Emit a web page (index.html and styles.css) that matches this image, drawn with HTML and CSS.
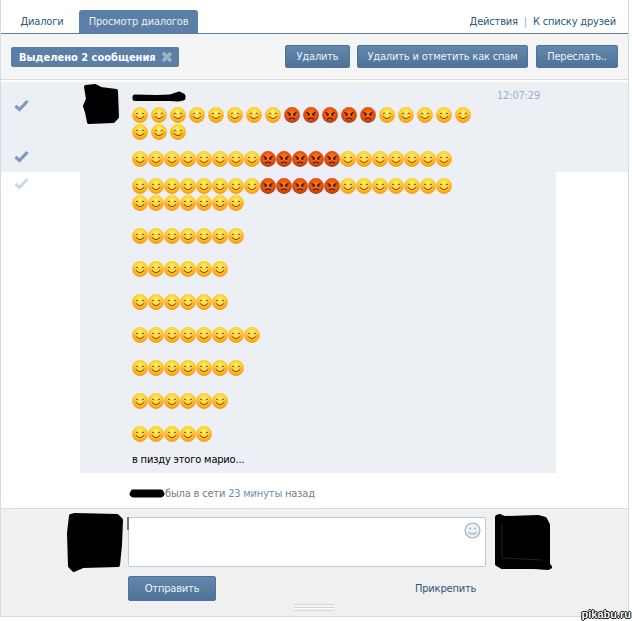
FILE: index.html
```html
<!DOCTYPE html>
<html lang="ru">
<head>
  <meta charset="UTF-8" />
  <title>Просмотр диалогов</title>
  <link rel="stylesheet" href="styles.css">
</head>
<body>

  <!-- shared icons -->
  <svg class="icon-defs" aria-hidden="true">
    <defs>
      <radialGradient id="smile-fill" cx="50%" cy="36%" r="68%">
        <stop offset="0" stop-color="#fff47e"/>
        <stop offset="0.5" stop-color="#ffd02a"/>
        <stop offset="0.85" stop-color="#fb9f12"/>
        <stop offset="1" stop-color="#ee7f0c"/>
      </radialGradient>
      <radialGradient id="angry-fill" cx="50%" cy="40%" r="62%">
        <stop offset="0" stop-color="#fb7c1c"/>
        <stop offset="0.65" stop-color="#e2500c"/>
        <stop offset="1" stop-color="#983a12"/>
      </radialGradient>
      <symbol id="smile" viewBox="0 0 16 16">
        <circle cx="8" cy="8" r="7.9" fill="url(#smile-fill)"/>
        <circle cx="3.4" cy="9.2" r="1.6" fill="#ff9a4a" opacity=".65"/>
        <circle cx="12.6" cy="9.2" r="1.6" fill="#ff9a4a" opacity=".65"/>
        <path d="M3.9 7Q5.2 5 6.5 7M9.5 7Q10.8 5 12.1 7M4 9.4Q8 13.8 12 9.4" fill="none" stroke="#7a4a10" stroke-width="1"/>
      </symbol>
      <symbol id="angry" viewBox="0 0 16 16">
        <circle cx="8" cy="8" r="7.9" fill="url(#angry-fill)"/>
        <path d="M3.4 5.4L6.8 7.4M12.6 5.4L9.2 7.4" stroke="#4a1606" stroke-width="1.3"/>
        <circle cx="5.5" cy="8" r="1" fill="#3c1204"/>
        <circle cx="10.5" cy="8" r="1" fill="#3c1204"/>
        <path d="M5.2 12.2Q8 9.8 10.8 12.2" fill="none" stroke="#3c1204" stroke-width="1.2"/>
      </symbol>
      <symbol id="check" viewBox="0 0 15 13">
        <path d="M1.5 7L5.5 10.5L13.5 2" fill="none" stroke="currentColor" stroke-width="3.2"/>
      </symbol>
    </defs>
  </svg>

  <div class="page">

    <!-- Tabs -->
    <div class="tabs">
      <a class="tab tab-first">Диалоги</a>
      <a class="tab tab-active">Просмотр диалогов</a>
      <div class="tabs-links">
        <a>Действия</a>
        <span class="tabs-sep">|</span>
        <a>К списку друзей</a>
      </div>
    </div>

    <!-- Selected messages toolbar -->
    <div class="toolbar">
      <div class="selected-badge">
        Выделено 2 сообщения
        <svg class="badge-close" viewBox="0 0 12 12"><path d="M2 2L10 10M10 2L2 10" stroke="#9fb3c9" stroke-width="3.4"/></svg>
      </div>
      <div class="toolbar-buttons">
        <button class="btn btn-delete">Удалить</button>
        <button class="btn btn-spam">Удалить и отметить как спам</button>
        <button class="btn btn-forward">Переслать..</button>
      </div>
    </div>

    <!-- Messages -->
    <div class="messages">

      <div class="msg msg-selected msg-first">
        <svg class="check"><use href="#check"/></svg>
        <div class="msg-body">
          <svg class="msg-avatar" viewBox="0 0 36 41"><path class="scribble" d="M3 3L12 2L18 5L33 7L34 33L30 37L6 38L4 28L2 22L5 15Z"/></svg>
          <div class="msg-content">
            <svg class="msg-name" viewBox="0 0 54 11"><path class="scribble-thin" d="M3 6L24 6.5L38 6L47 3L51 5L51 7L46 8L38 7.5L24 7.5L3 7.5Z"/></svg>
            <div class="emoji-line emoji-spaced">
              <svg class="emoji"><use href="#smile"/></svg><svg class="emoji"><use href="#smile"/></svg><svg class="emoji"><use href="#smile"/></svg><svg class="emoji"><use href="#smile"/></svg><svg class="emoji"><use href="#smile"/></svg><svg class="emoji"><use href="#smile"/></svg><svg class="emoji"><use href="#smile"/></svg><svg class="emoji"><use href="#smile"/></svg>
              <svg class="emoji"><use href="#angry"/></svg><svg class="emoji"><use href="#angry"/></svg><svg class="emoji"><use href="#angry"/></svg><svg class="emoji"><use href="#angry"/></svg><svg class="emoji"><use href="#angry"/></svg>
              <svg class="emoji"><use href="#smile"/></svg><svg class="emoji"><use href="#smile"/></svg><svg class="emoji"><use href="#smile"/></svg><svg class="emoji"><use href="#smile"/></svg><svg class="emoji"><use href="#smile"/></svg>
            </div>
            <div class="emoji-line emoji-spaced">
              <svg class="emoji"><use href="#smile"/></svg><svg class="emoji"><use href="#smile"/></svg><svg class="emoji"><use href="#smile"/></svg>
            </div>
          </div>
          <div class="msg-time">12:07:29</div>
        </div>
      </div>

      <div class="msg msg-selected msg-second">
        <svg class="check"><use href="#check"/></svg>
        <div class="msg-body">
          <div class="msg-content">
            <div class="emoji-line">
              <svg class="emoji"><use href="#smile"/></svg><svg class="emoji"><use href="#smile"/></svg><svg class="emoji"><use href="#smile"/></svg><svg class="emoji"><use href="#smile"/></svg><svg class="emoji"><use href="#smile"/></svg><svg class="emoji"><use href="#smile"/></svg><svg class="emoji"><use href="#smile"/></svg><svg class="emoji"><use href="#smile"/></svg>
              <svg class="emoji"><use href="#angry"/></svg><svg class="emoji"><use href="#angry"/></svg><svg class="emoji"><use href="#angry"/></svg><svg class="emoji"><use href="#angry"/></svg><svg class="emoji"><use href="#angry"/></svg>
              <svg class="emoji"><use href="#smile"/></svg><svg class="emoji"><use href="#smile"/></svg><svg class="emoji"><use href="#smile"/></svg><svg class="emoji"><use href="#smile"/></svg><svg class="emoji"><use href="#smile"/></svg><svg class="emoji"><use href="#smile"/></svg><svg class="emoji"><use href="#smile"/></svg>
            </div>
          </div>
        </div>
      </div>

      <div class="msg msg-rest">
        <svg class="check check-light"><use href="#check"/></svg>
        <div class="msg-body">
          <div class="msg-content">
            <div class="msg-text">
              <div class="emoji-line">
                <svg class="emoji"><use href="#smile"/></svg><svg class="emoji"><use href="#smile"/></svg><svg class="emoji"><use href="#smile"/></svg><svg class="emoji"><use href="#smile"/></svg><svg class="emoji"><use href="#smile"/></svg><svg class="emoji"><use href="#smile"/></svg><svg class="emoji"><use href="#smile"/></svg><svg class="emoji"><use href="#smile"/></svg>
                <svg class="emoji"><use href="#angry"/></svg><svg class="emoji"><use href="#angry"/></svg><svg class="emoji"><use href="#angry"/></svg><svg class="emoji"><use href="#angry"/></svg><svg class="emoji"><use href="#angry"/></svg>
                <svg class="emoji"><use href="#smile"/></svg><svg class="emoji"><use href="#smile"/></svg><svg class="emoji"><use href="#smile"/></svg><svg class="emoji"><use href="#smile"/></svg><svg class="emoji"><use href="#smile"/></svg><svg class="emoji"><use href="#smile"/></svg><svg class="emoji"><use href="#smile"/></svg>
              </div>
              <div class="emoji-line">
                <svg class="emoji"><use href="#smile"/></svg><svg class="emoji"><use href="#smile"/></svg><svg class="emoji"><use href="#smile"/></svg><svg class="emoji"><use href="#smile"/></svg><svg class="emoji"><use href="#smile"/></svg><svg class="emoji"><use href="#smile"/></svg><svg class="emoji"><use href="#smile"/></svg>
              </div>
            </div>
            <div class="msg-text emoji-line">
              <svg class="emoji"><use href="#smile"/></svg><svg class="emoji"><use href="#smile"/></svg><svg class="emoji"><use href="#smile"/></svg><svg class="emoji"><use href="#smile"/></svg><svg class="emoji"><use href="#smile"/></svg><svg class="emoji"><use href="#smile"/></svg><svg class="emoji"><use href="#smile"/></svg>
            </div>
            <div class="msg-text emoji-line">
              <svg class="emoji"><use href="#smile"/></svg><svg class="emoji"><use href="#smile"/></svg><svg class="emoji"><use href="#smile"/></svg><svg class="emoji"><use href="#smile"/></svg><svg class="emoji"><use href="#smile"/></svg><svg class="emoji"><use href="#smile"/></svg>
            </div>
            <div class="msg-text emoji-line">
              <svg class="emoji"><use href="#smile"/></svg><svg class="emoji"><use href="#smile"/></svg><svg class="emoji"><use href="#smile"/></svg><svg class="emoji"><use href="#smile"/></svg><svg class="emoji"><use href="#smile"/></svg><svg class="emoji"><use href="#smile"/></svg>
            </div>
            <div class="msg-text emoji-line">
              <svg class="emoji"><use href="#smile"/></svg><svg class="emoji"><use href="#smile"/></svg><svg class="emoji"><use href="#smile"/></svg><svg class="emoji"><use href="#smile"/></svg><svg class="emoji"><use href="#smile"/></svg><svg class="emoji"><use href="#smile"/></svg><svg class="emoji"><use href="#smile"/></svg><svg class="emoji"><use href="#smile"/></svg>
            </div>
            <div class="msg-text emoji-line">
              <svg class="emoji"><use href="#smile"/></svg><svg class="emoji"><use href="#smile"/></svg><svg class="emoji"><use href="#smile"/></svg><svg class="emoji"><use href="#smile"/></svg><svg class="emoji"><use href="#smile"/></svg><svg class="emoji"><use href="#smile"/></svg><svg class="emoji"><use href="#smile"/></svg>
            </div>
            <div class="msg-text emoji-line">
              <svg class="emoji"><use href="#smile"/></svg><svg class="emoji"><use href="#smile"/></svg><svg class="emoji"><use href="#smile"/></svg><svg class="emoji"><use href="#smile"/></svg><svg class="emoji"><use href="#smile"/></svg><svg class="emoji"><use href="#smile"/></svg>
            </div>
            <div class="msg-text emoji-line">
              <svg class="emoji"><use href="#smile"/></svg><svg class="emoji"><use href="#smile"/></svg><svg class="emoji"><use href="#smile"/></svg><svg class="emoji"><use href="#smile"/></svg><svg class="emoji"><use href="#smile"/></svg>
            </div>
            <div class="msg-last">в пизду этого марио...</div>
          </div>
        </div>
      </div>
    </div>

    <!-- Online status -->
    <div class="status">
      <svg class="status-name" viewBox="0 0 36 9"><path class="scribble-thin" d="M4 3L32 3L33 5L32 6L4 6L3 5Z"/></svg>
      <span>была в сети <a class="status-time">23 минуты</a> назад</span>
    </div>

    <!-- Reply form -->
    <div class="composer">
      <svg class="composer-avatar composer-avatar-left" viewBox="0 0 56 59"><path class="scribble" d="M4 3L8 2L50 3L54 7L53 32L51 52L16 53L7 57L3 53L2 20Z"/></svg>
      <div class="composer-main">
        <div class="composer-input">
          <span class="composer-cursor"></span>
          <svg class="composer-smile" viewBox="0 0 17 17">
            <circle cx="8.5" cy="8.5" r="7.4" fill="#eef1f5" stroke="#a9bac9" stroke-width="1.4"/>
            <circle cx="6" cy="6.5" r="1.1" fill="#a9bac9"/>
            <circle cx="11" cy="6.5" r="1.1" fill="#a9bac9"/>
            <path d="M4.2 10.2Q8.5 14 12.8 10.2" fill="none" stroke="#a9bac9" stroke-width="1.4"/>
          </svg>
        </div>
        <div class="composer-actions">
          <button class="btn btn-send">Отправить</button>
          <a class="composer-attach">Прикрепить</a>
        </div>
      </div>
      <svg class="composer-avatar composer-avatar-right" viewBox="0 0 58 57"><path class="scribble" d="M3 3L6 2L10 4L44 3L51 5L54 11L54 50L56 53L54 54L40 53L8 53L3 50Z"/><path d="M8 10L8 44L48 46" fill="none" stroke="#1d2326" stroke-width="1"/></svg>
      <div class="composer-grip"></div>
    </div>
  </div>

  <div class="watermark">pikabu.ru</div>

</body>
</html>
```

FILE: styles.css
```css
body {
  margin: 0;
  background: white;
  font-family: "DejaVu Sans Condensed", "DejaVu Sans", sans-serif;
  font-stretch: condensed;
  font-size: 11px;
  letter-spacing: -0.18px;
  color: #000;
}
a {
  color: #2b587a;
}
.icon-defs {
  position: absolute;
  width: 0;
  height: 0;
}
.scribble {
  fill: #000;
  stroke: #000;
  stroke-width: 4;
  stroke-linejoin: round;
}
.scribble-thin {
  fill: #000;
  stroke: #000;
  stroke-width: 5;
  stroke-linejoin: round;
}
.page {
  position: relative;
  width: 627px;
  border-left: 1px solid #d4dde7;
  border-right: 1px solid #d4dde7;
  border-bottom: 1px solid #d4dde7;
}

/* tabs */
.tabs {
  display: flex;
  align-items: flex-end;
  height: 23px;
  padding-top: 10px;
  border-bottom: 1px solid #5b7fa6;
}
.tab {
  width: 119px;
  height: 23px;
  line-height: 24px;
  text-align: center;
  flex-shrink: 0;
}
.tab-first {
  box-sizing: border-box;
  width: 78px;
  padding-left: 4px;
}
.tab-active {
  background: #5b7fa6;
  color: #e9eef4;
  border-radius: 3px 3px 0 0;
}
.tabs-links {
  margin-left: auto;
  margin-right: 12px;
  height: 23px;
  line-height: 24px;
  display: flex;
  gap: 6px;
}
.tabs-sep {
  color: #8fa8c2;
}

/* toolbar */
.toolbar {
  display: flex;
  align-items: center;
  justify-content: space-between;
  height: 45px;
  padding: 0 10px;
  background: #f5f5f5;
  border-bottom: 1px solid #d8d8d8;
}
.selected-badge {
  display: flex;
  align-items: center;
  gap: 5px;
  box-sizing: border-box;
  width: 168px;
  height: 20px;
  padding-left: 8px;
  margin-top: 1px;
  background: #5b7fa6;
  border-radius: 2px;
  color: #fff;
  font-weight: bold;
  letter-spacing: 0;
}
.badge-close {
  width: 12px;
  height: 12px;
}
.toolbar-buttons {
  display: flex;
  gap: 7px;
}
.btn {
  box-sizing: border-box;
  height: 23px;
  padding: 0;
  background: linear-gradient(#6487ad, #4e7299);
  border: 1px solid #4f7399;
  border-radius: 2px;
  color: #eef2f6;
  font-family: inherit;
  font-stretch: inherit;
  font-size: 11px;
  letter-spacing: inherit;
}
.btn-delete {
  width: 65px;
}
.btn-spam {
  width: 171px;
}
.btn-forward {
  width: 82px;
  margin-left: 1px;
}

/* messages */
.messages {
  padding-top: 2px;
}
.msg {
  display: flex;
}
.msg-selected {
  background: #eceff4;
}
.check {
  width: 15px;
  height: 13px;
  margin-left: 13px;
  margin-right: 51px;
  flex-shrink: 0;
  color: #7f9bbb;
}
.check-light {
  color: #cfdbe8;
  margin-top: 5px;
}
.msg-first .check {
  margin-top: 17px;
}
.msg-second .check {
  margin-top: 5px;
}
.msg-body {
  display: flex;
  width: 476px;
  background: #eceff4;
  box-sizing: border-box;
  padding-left: 52px;
  padding-top: 6px;
  padding-bottom: 4px;
}
.msg-first .msg-body {
  padding-top: 2px;
  padding-left: 3px;
  padding-bottom: 4px;
}
.msg-rest .msg-body {
  padding-bottom: 0;
}
.msg-avatar {
  width: 36px;
  height: 41px;
  margin-right: 13px;
  flex-shrink: 0;
}
.msg-content {
  width: 345px;
}
.msg-name {
  display: block;
  width: 54px;
  height: 11px;
  margin-top: 7px;
  margin-bottom: 5px;
}
.msg-time {
  margin-left: 20px;
  margin-top: 5px;
  color: #9fb0c6;
}
.emoji-line {
  display: flex;
  height: 17px;
}
.emoji-spaced {
  gap: 3px;
}
.emoji {
  width: 16px;
  height: 16px;
  flex-shrink: 0;
}
.msg-text {
  margin-bottom: 16px;
}
.msg-last {
  line-height: 14px;
  margin-top: -6px;
  padding-bottom: 6px;
}

/* status */
.status {
  display: flex;
  align-items: center;
  height: 35px;
  padding-left: 128px;
  padding-top: 5px;
  box-sizing: border-box;
  color: #7d7d7d;
}
.status-name {
  width: 36px;
  height: 9px;
}
.status-time {
  color: #6f8cab;
}

/* reply form */
.composer {
  position: relative;
  display: flex;
  height: 108px;
  box-sizing: border-box;
  background: #f0f0f0;
  border-top: 1px solid #d4dde7;
}
.composer-avatar {
  flex-shrink: 0;
  width: 56px;
  height: 59px;
  margin-top: 4px;
}
.composer-avatar-left {
  margin-left: 66px;
  margin-right: 5px;
}
.composer-avatar-right {
  width: 58px;
  height: 57px;
  margin-top: 5px;
  margin-left: 8px;
}
.composer-main {
  width: 358px;
  padding-top: 8px;
}
.composer-input {
  position: relative;
  box-sizing: border-box;
  height: 50px;
  background: white;
  border: 1px solid #c0cad5;
  border-radius: 2px;
}
.composer-cursor {
  position: absolute;
  left: -2px;
  top: -1px;
  width: 2px;
  height: 13px;
  background: #777;
}
.composer-smile {
  position: absolute;
  right: 4px;
  top: 4px;
  width: 17px;
  height: 17px;
}
.composer-actions {
  display: flex;
  margin-top: 9px;
}
.btn-send {
  width: 88px;
  height: 25px;
}
.composer-attach {
  margin-left: 199px;
  margin-top: 6px;
}
.composer-grip {
  position: absolute;
  left: 293px;
  bottom: 5px;
  width: 40px;
  height: 7px;
  background: repeating-linear-gradient(#d4d4d4 0 1px, #fafafa 1px 2px, #f0f0f0 2px 3px);
}

.watermark {
  position: absolute;
  right: 1px;
  top: 608px;
  color: white;
  font-family: "Liberation Sans", sans-serif;
  font-stretch: normal;
  font-size: 11px;
  font-weight: bold;
  letter-spacing: 0;
  text-shadow: 1px 0 0 #000, -1px 0 0 #000, 0 1px 0 #000, 0 -1px 0 #000;
}
```
